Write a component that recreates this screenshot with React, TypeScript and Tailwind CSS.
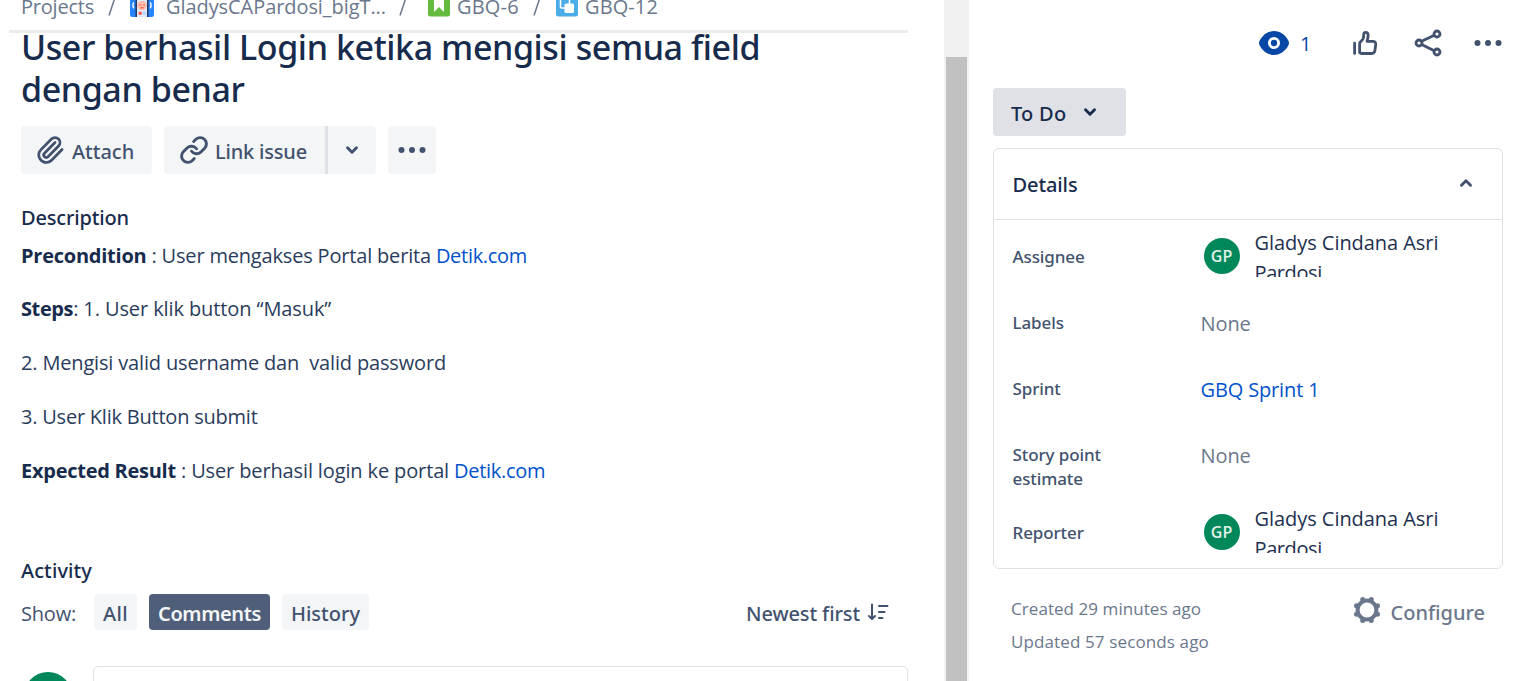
import type { ReactNode } from "react";
import { Link, Paperclip } from "lucide-react";

const MEDIUM = "font-['Noto_Sans','Open_Sans',sans-serif] font-medium";

function Dots() {
  return (
    <svg viewBox="0 0 24 24" className="size-9 shrink-0" fill="currentColor">
      <circle cx="5" cy="12" r="2" />
      <circle cx="12" cy="12" r="2" />
      <circle cx="19" cy="12" r="2" />
    </svg>
  );
}

function Chevron({ up = false }: { up?: boolean }) {
  return (
    <svg
      viewBox="0 0 14 10"
      className={up ? "h-[10px] w-[14px] shrink-0 rotate-180" : "h-[10px] w-[14px] shrink-0"}
      fill="none"
      stroke="currentColor"
      strokeWidth="2.9"
      strokeLinecap="round"
      strokeLinejoin="round"
    >
      <path d="M2.5 2.8 7 7.3l4.5-4.5" />
    </svg>
  );
}

function EyeIcon() {
  return (
    <svg viewBox="0 0 30 24" className="h-6 w-[30px]">
      <path
        d="M15 0C8.6 0 3.6 4 .7 9.4a5.6 5.6 0 0 0 0 5.200C3.6 20 8.6 24 15 24s11.4-4 14.3-9.400a5.6 5.6 0 0 0 0-5.200C26.4 4 21.4 0 15 0Z"
        fill="#0747a6"
      />
      <circle cx="15" cy="12" r="4.6" fill="none" stroke="#fff" strokeWidth="2.9" />
    </svg>
  );
}

function ThumbIcon() {
  return (
    <svg
      viewBox="0 0 26 26"
      className="size-[26px]"
      fill="none"
      stroke="currentColor"
      strokeWidth="2.8"
      strokeLinecap="round"
      strokeLinejoin="round"
    >
      <path d="M2.6 13.2v10.2" />
      <path d="M7.6 22v-8.200c0-.8.3-1.400.9-2L10.700 9.300c.5-.6.7-1.200.8-2l.3-3.400c.2-1.900 3.900-2.200 4.300.8.2 1.700-.4 4-1.100 6.600h5.800c2 0 3.100 1.300 2.900 3.200l-.8 6.100c-.3 2-1.300 2.900-3.300 2.900H9.200c-1 0-1.600-.6-1.600-1.500Z" />
    </svg>
  );
}

function ShareIcon() {
  return (
    <svg viewBox="0 0 28 28" className="size-7" fill="none" stroke="currentColor" strokeWidth="2.8">
      <path d="M7.6 12.200 20.300 6.300M7.600 15.500l12.700 6.300" />
      <circle cx="5" cy="14" r="3" />
      <circle cx="23" cy="5" r="3" />
      <circle cx="23" cy="23" r="3" />
    </svg>
  );
}

function GearIcon() {
  return (
    <svg viewBox="-14 -14 28 28" className="size-7" stroke="currentColor" fill="none">
      <circle r="9.4" strokeWidth="4" />
      <g strokeWidth="5" strokeLinecap="round">
        <path d="M4.300-10.500v0M10.500-4.300v0M10.500 4.300v0M4.300 10.500v0M-4.300 10.500v0M-10.500 4.300v0M-10.500-4.300v0M-4.300-10.500v0" />
      </g>
    </svg>
  );
}

function SortIcon() {
  return (
    <svg
      viewBox="0 0 22 18"
      className="h-[18px] w-[22px]"
      fill="none"
      stroke="currentColor"
      strokeWidth="2"
      strokeLinecap="round"
      strokeLinejoin="round"
    >
      <path d="M5 1.500v14M2 13l3 3 3-3M12 3h8.500M12 9h5.500M12 15h3.500" />
    </svg>
  );
}

function ProjectIcon() {
  return (
    <svg viewBox="0 0 24 24" className="size-6">
      <rect width="24" height="24" rx="2.5" fill="#2684ff" />
      <path d="M5.500 0h13v24h-13z" fill="#253858" />
      <path d="M7 0h10v24H7z" fill="#deebff" />
      <circle cx="12" cy="12.500" r="4.800" fill="#ffbdad" />
      <path d="M9.200 12h1.600M13.200 12h1.600" stroke="#ff7452" strokeWidth="1.500" />
      <path d="M10.600 14.800h2.800" stroke="#de350b" />
      <path d="M8.700 18.800h3v3h-3z" fill="#ff5630" />
      <path d="M12.800 18.800h3v3h-3z" fill="#b3d4ff" />
      <path d="M3.800 9.300q-2 3 0 6M20.200 9.300q2 3 0 6" stroke="#fff" strokeWidth="1.2" fill="none" />
    </svg>
  );
}

function StoryIcon() {
  return (
    <svg viewBox="0 0 22 24" className="h-6 w-[22px]">
      <rect y="1.5" width="22" height="22" rx="2.5" fill="#63ba3c" />
      <path d="M6 6h10v13l-5-5-5 5Z" fill="#fff" />
    </svg>
  );
}

function SubtaskIcon() {
  return (
    <svg viewBox="0 0 22 24" className="h-6 w-[22px]">
      <rect y="1.5" width="22" height="22" rx="2.5" fill="#4bade8" />
      <rect x="4.5" y="6" width="9" height="9" rx="1" fill="none" stroke="#fff" strokeWidth="1.6" />
      <rect x="8.5" y="10.5" width="9.5" height="9.5" rx="1.5" fill="#fff" />
    </svg>
  );
}

function Avatar() {
  return (
    <div className="mt-[6px] flex size-9 shrink-0 items-center justify-center rounded-full bg-[#00875a] text-[16px] font-semibold leading-none text-[#e3f3ec]">
      GP
    </div>
  );
}

function Person() {
  return (
    <div className="flex h-[48px] items-center gap-[15px] pl-[3px]">
      <Avatar />
      <div className="h-[48px] overflow-hidden text-[20px] leading-[30px] tracking-[-0.05px] text-[#1e3050]">
        <div className="-mt-px">Gladys Cindana Asri</div>
        <div className="tracking-[-0.4px]">Pardosi</div>
      </div>
    </div>
  );
}

function Field({ label, children }: { label: string; children: ReactNode }) {
  return (
    <div className="flex">
      <div
        className={`w-[188px] shrink-0 pr-[70px] pt-[16px] text-[17px] leading-6 tracking-[-0.1px] text-[#42526e] ${MEDIUM}`}
      >
        {label}
      </div>
      <div className="flex-1 pt-[16px] leading-[26px]">{children}</div>
    </div>
  );
}

const Slash = ({ className }: { className: string }) => (
  <svg viewBox="0 0 8 18" className={`h-[18px] w-2 shrink-0 ${className}`} stroke="#6b778c" strokeWidth="1.5">
    <path d="M1 17.500 6.500 1" />
  </svg>
);

export default function App() {
  return (
    <div className="flex h-[681px] w-[1527px] overflow-hidden bg-white font-['Open_Sans','Noto_Sans',sans-serif] text-[20px] text-[#172b4d]">
      <main className="w-[944px] shrink-0 pl-[21px] pr-[36px]">
        <header className="-ml-3 h-[33px] border-b-[3px] border-[#ebecf0] pl-3">
          <nav className="flex h-[10px] items-center whitespace-nowrap leading-[12px] text-[#6b778c]">
            <span className="mt-[4px] w-[87px] tracking-[-0.22px]">Projects</span>
            <Slash className="mt-[4px]" />
            <span className="ml-[14px]"><ProjectIcon /></span>
            <span className="ml-[12px] mt-[4px] w-[233px] tracking-[-0.07px]">GladysCAPardosi_bigT...</span>
            <Slash className="mt-[4px]" />
            <span className="ml-[21px]"><StoryIcon /></span>
            <span className="ml-[7px] mt-[4px] w-[76px] tracking-[0.2px]">GBQ-6</span>
            <Slash className="mt-[4px]" />
            <span className="ml-[15px]"><SubtaskIcon /></span>
            <span className="ml-[7px] mt-[4px] tracking-[0.1px]">GBQ-12</span>
          </nav>
        </header>

        <h1 className={`-mt-[7px] whitespace-nowrap text-[34px] leading-[42px] tracking-[-0.41px] ${MEDIUM}`}>
          User berhasil Login ketika mengisi semua field
          <br />
          dengan benar
        </h1>

        <div className={`mt-4 flex h-12 gap-3 whitespace-nowrap text-[#42526e] ${MEDIUM}`}>
          <button className="flex w-[131px] items-center rounded-[4px] bg-[#f4f5f7] pl-[14px]">
            <Paperclip size={30} strokeWidth={2.2} />
            <span className="ml-[7px] mt-[3px]">Attach</span>
          </button>
          <div className="flex w-[212px]">
            <button className="flex w-[161px] items-center rounded-l-[4px] bg-[#f4f5f7] pl-[15px]">
              <Link size={30} strokeWidth={2.3} />
              <span className="ml-[6px] mt-[3px] tracking-[-0.19px]">Link issue</span>
            </button>
            <span className="w-[3px] bg-[#dfe1e6]" />
            <button className="flex flex-1 items-center justify-center rounded-r-[4px] bg-[#f4f5f7]">
              <Chevron />
            </button>
          </div>
          <button className="flex w-12 items-center justify-center rounded-[4px] bg-[#f4f5f7]">
            <Dots />
          </button>
        </div>

        <h2 className={`mt-[29px] leading-[30px] tracking-[-0.16px] ${MEDIUM}`}>Description</h2>
        <div className="mt-2 flex flex-col gap-6 whitespace-pre leading-[30px] tracking-[-0.18px] text-[#2a3c5c]">
          <p>
            <b className="tracking-[-0.24px] text-[#172b4d]">Precondition</b>
            <span> : User mengakses Portal berita </span>
            <a className="tracking-[-0.3px] text-[#0052cc]">Detik.com</a>
          </p>
          <p className="-mt-px tracking-[-0.1px]">
            <b className="tracking-[-0.4px] text-[#172b4d]">Steps</b>: 1. User klik button “Masuk”
          </p>
          <p className="tracking-[-0.16px]">2. Mengisi valid username dan  valid password</p>
          <p className="tracking-[-0.22px]">3. User Klik Button submit</p>
          <p>
            <b className="tracking-[-0.26px] text-[#172b4d]">Expected Result</b>
            <span className="tracking-[-0.13px]"> : User berhasil login ke portal </span>
            <a className="tracking-[-0.3px] text-[#0052cc]">Detik.com</a>
          </p>
        </div>

        <h2 className={`mt-[70px] leading-[30px] tracking-[0.1px] ${MEDIUM}`}>Activity</h2>
        <div className={`mt-[8px] flex h-9 items-center text-[#42526e] ${MEDIUM}`}>
          <span className="mt-[3px] w-[73px] font-['Open_Sans',sans-serif] font-normal tracking-[-0.2px]">Show:</span>
          <button className="h-9 w-[43px] rounded-[4px] bg-[#f4f5f7] pt-[4px] tracking-[0.35px]">All</button>
          <button className="ml-3 h-9 w-[121px] rounded-[4px] bg-[#505f79] pt-[4px] font-semibold tracking-[-0.37px] text-[#f4f5f7]">
            Comments
          </button>
          <button className="ml-3 h-9 w-[87px] rounded-[4px] bg-[#f4f5f7] pt-[4px]">History</button>
          <span className="ml-auto mt-[4px] tracking-[-0.1px]">Newest first</span>
          <span className="ml-[7px] mr-[19px]"><SortIcon /></span>
        </div>

        <div className="mt-9 flex">
          <div className="ml-[3px] mt-[6px] size-12 shrink-0 rounded-full bg-[#00875a]" />
          <div className="ml-[21px] h-20 flex-1 rounded-[5px] border border-[#dfe1e6]" />
        </div>
      </main>

      <div className="w-[25px] shrink-0 bg-[#f1f1f1] pl-[2px] pr-[2px] pt-[57px]">
        <div className="h-full bg-[#c1c1c1]" />
      </div>

      <aside className="flex-1 pl-6 pr-6">
        <div className="-mr-2 mb-[2px] flex h-[86px] items-center justify-end text-[#42526e]">
          <span className="flex items-center gap-[11px] text-[#0747a6]">
            <EyeIcon />
            <span className="mt-[2px] w-[11px] leading-6">1</span>
          </span>
          <span className="ml-[41px]"><ThumbIcon /></span>
          <span className="ml-[36px]"><ShareIcon /></span>
          <span className="ml-[28px] mr-[5px]"><Dots /></span>
        </div>

        <button className={`flex h-12 w-[133px] items-center rounded-[4px] bg-[#dfe1e6] pl-[18px] ${MEDIUM}`}>
          <span className="mt-[3px] w-[72px] text-left tracking-[0.25px]">To Do</span>
          <Chevron />
        </button>

        <section className="mt-3 h-[421px] rounded-[6px] border border-[#dfe1e6]">
          <div className="flex h-[71px] items-center justify-between border-b border-[#dfe1e6] pl-[18.5px] pr-[29px]">
            <h2 className={`mt-[2px] tracking-[-0.1px] ${MEDIUM}`}>Details</h2>
            <span className="-mt-[3px] text-[#42526e]"><Chevron up /></span>
          </div>
          <div className="pl-[18.5px] pt-[9px]">
            <div className="flex h-[66px]">
              <div className={`mt-[16px] w-[188px] text-[17px] leading-6 tracking-[-0.1px] text-[#42526e] ${MEDIUM}`}>
                Assignee
              </div>
              <Person />
            </div>
            <div className="h-[66px]">
              <Field label="Labels">
                <p className="tracking-[-0.1px] text-[#6b778c]">None</p>
              </Field>
            </div>
            <div className="h-[66px]">
              <Field label="Sprint">
                <p className="tracking-[-0.14px] text-[#0052cc]">GBQ Sprint 1</p>
              </Field>
            </div>
            <div className="h-[78px]">
              <Field label="Story point estimate">
                <p className="tracking-[-0.1px] text-[#6b778c]">None</p>
              </Field>
            </div>
            <div className="flex">
              <div className={`mt-[16px] w-[188px] text-[17px] leading-6 tracking-[-0.1px] text-[#42526e] ${MEDIUM}`}>
                Reporter
              </div>
              <Person />
            </div>
          </div>
        </section>

        <footer className="flex justify-between pl-[18px] pr-[18px] pt-[23px] text-[#6b778c]">
          <div className="text-[17px] leading-[33px] tracking-[0.06px]">
            <p>Created 29 minutes ago</p>
            <p className="tracking-[0.12px]">Updated 57 seconds ago</p>
          </div>
          <div className={`flex h-9 items-center gap-[10px] ${MEDIUM}`}>
            <GearIcon />
            <span className="mt-[5px]">Configure</span>
          </div>
        </footer>
      </aside>
    </div>
  );
}
